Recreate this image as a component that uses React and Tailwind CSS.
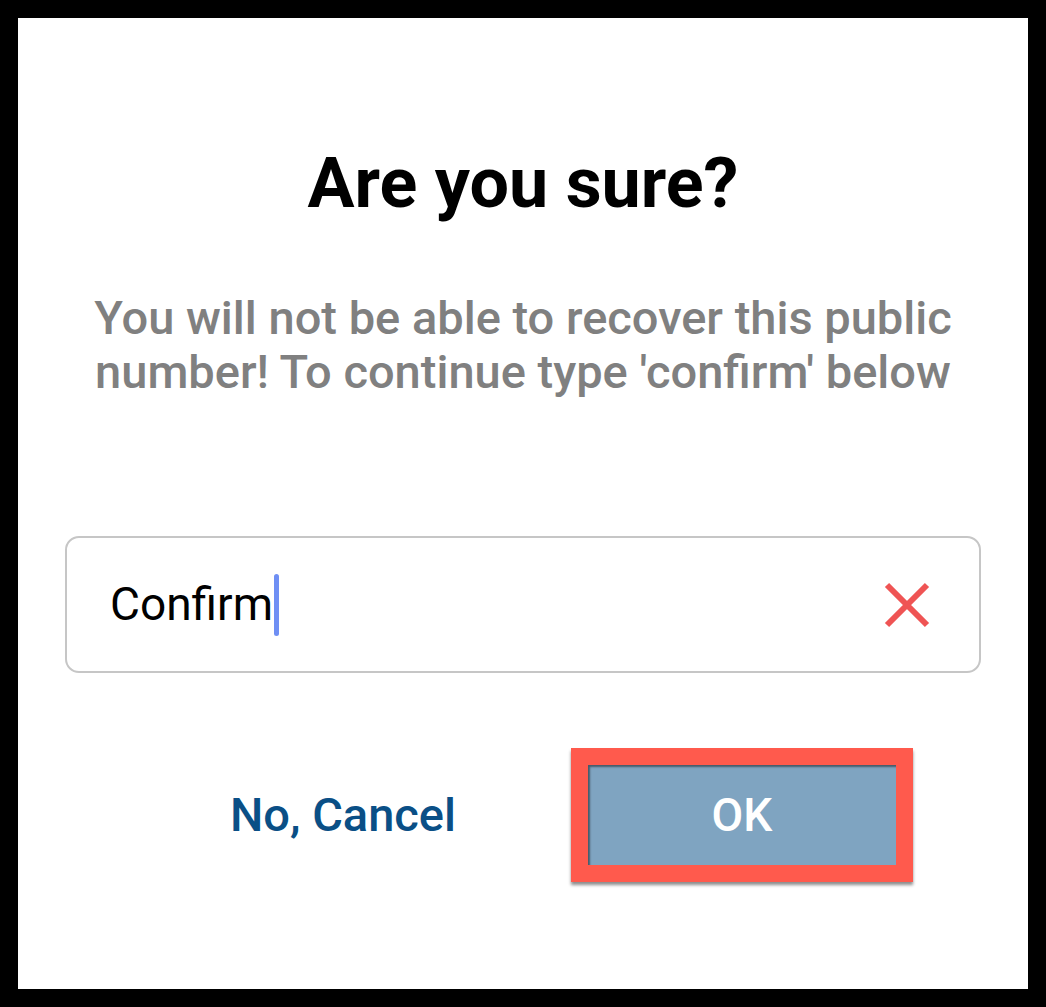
export default function App() {
  return (
    <div className="w-[1046px] h-[1007px] bg-black p-[18px] font-['Roboto',sans-serif]">
      <div className="w-full h-full bg-white flex flex-col px-[47px]">
        <h1 className="mt-[130px] text-center text-[70px] leading-none font-bold text-black">
          Are you sure?
        </h1>

        <p className="mt-[73px] text-center text-[47px] leading-[54px] font-medium text-[#808080]">
          You will not be able to recover this public number! To continue type 'confirm' below
        </p>

        <div className="mt-[137px] h-[137px] border-2 border-[#c6c6c6] rounded-[14px] flex items-center pl-[43px] pr-[49px]">
          <div className="flex-1 flex items-center">
            <span className="text-[46px] text-black">Confirm</span>
            <span className="inline-block w-[5px] h-[62px] rounded-full bg-[#6f8ff4] ml-[1px]" />
          </div>
          <svg width="46" height="46" viewBox="0 0 46 46">
            <path d="M3 3 L43 43 M43 3 L3 43" stroke="#ef5454" strokeWidth="6" />
          </svg>
        </div>

        <div className="mt-[75px] flex items-center justify-end gap-[115px] pr-[68px]">
          <button className="text-[47px] font-medium text-[#0a4f86]">No, Cancel</button>
          <div className="border-[17px] border-[#ff5a4d] shadow-[0_3px_3px_rgba(0,0,0,0.45)]">
            <div className="w-[308px] h-[100px] bg-[#7fa4c1] shadow-[inset_2px_2px_2px_rgba(0,0,0,0.45)] flex items-center justify-center">
              <span className="text-[46px] font-medium text-white">OK</span>
            </div>
          </div>
        </div>
      </div>
    </div>
  );
}
